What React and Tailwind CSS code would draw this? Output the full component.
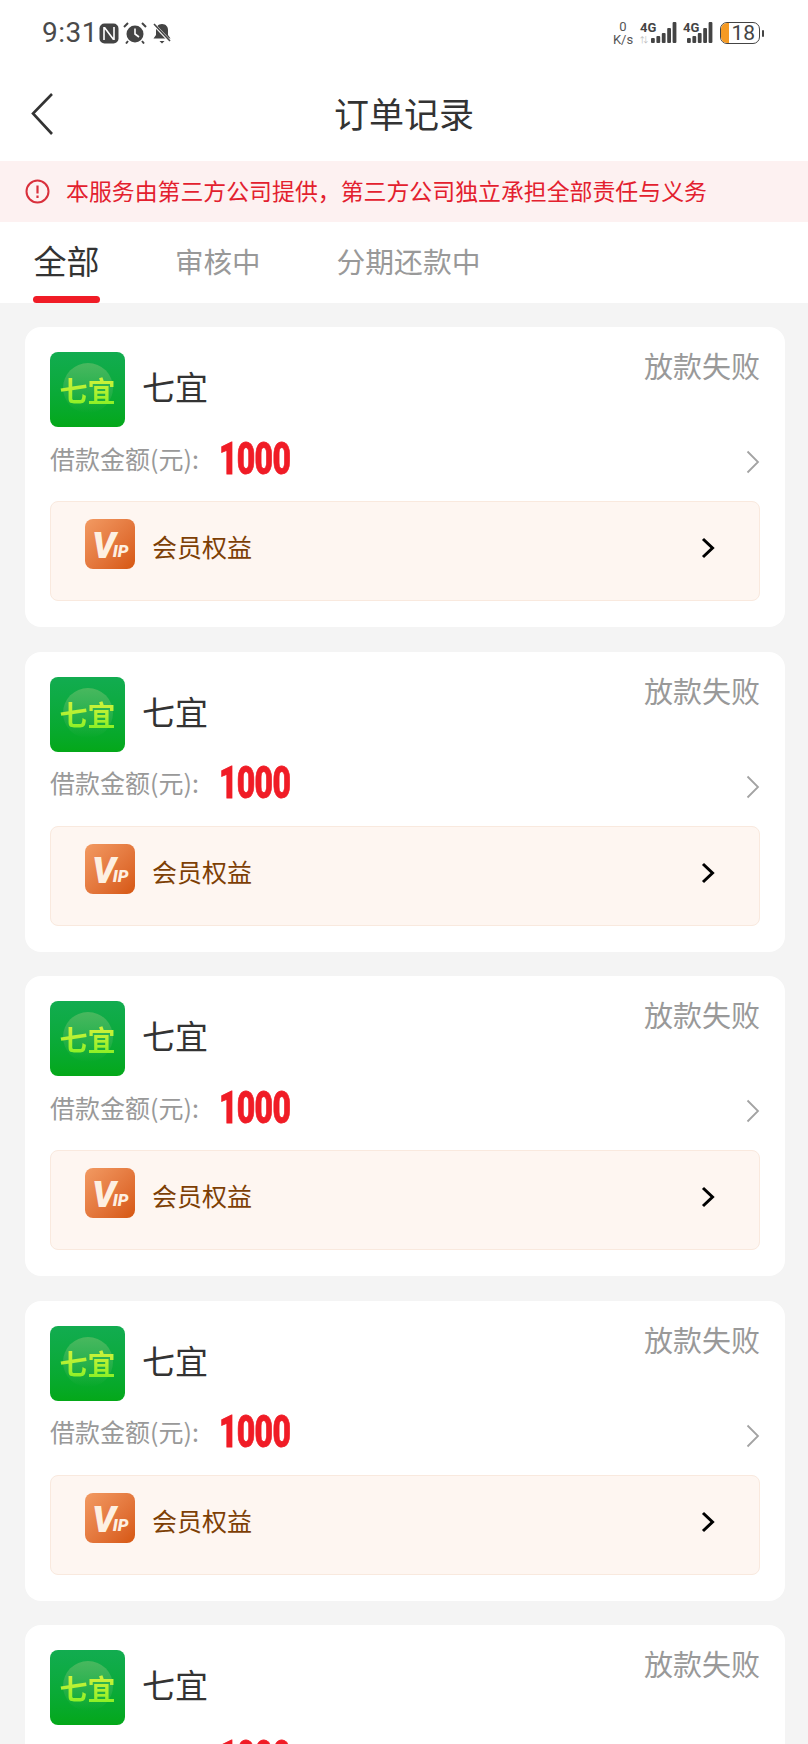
const cjk = "font-['Noto_Sans_CJK_SC','Noto_Sans',sans-serif]";
const orders = [1, 2, 3, 4, 5];
const bars = [
  [0, 17, 5],
  [5.4, 15, 7],
  [10.8, 12, 10],
  [16.2, 7, 15],
  [21.6, 1, 21],
];

function StatusBar() {
  return (
    <div className="flex h-[66px] items-center justify-between pl-[42px] pr-[44px] text-[#444]">
      <div className="flex items-center">
        <span className="w-[57px] font-['Roboto',sans-serif] text-[28px] leading-none tracking-[0.5px] text-[#4a4a4a]">9:31</span>
        <svg width="20" height="21" viewBox="0 0 20 21">
          <rect x="0.5" y="0.5" width="19" height="20" rx="5" fill="#444" />
          <path d="M5 17V4M15 17V4M5.5 4.5l9 12" fill="none" stroke="#fff" strokeWidth="1.6" />
        </svg>
        <svg width="24" height="22" viewBox="0 0 24 22" className="ml-[4px]">
          <circle cx="12" cy="12" r="8.5" fill="#444" />
          <path d="M12 6.5V12l4 3" fill="none" stroke="#fff" strokeWidth="1.6" />
          <path d="M1 5l4-4M23 5l-4-4M5 19l-2 2.5M19 19l2 2.5" stroke="#444" strokeWidth="2" />
        </svg>
        <svg width="20" height="21" viewBox="0 0 20 21" className="ml-[5px]">
          <path d="M10 1c4 0 6 3 6 6v5l2.5 3.5h-17L4 12V7c0-3 2-6 6-6z" fill="#444" />
          <path d="M7.5 18h5l-2.5 2.5z" fill="#444" />
          <path d="M2 1.5l16 17" stroke="#fff" strokeWidth="3" />
          <path d="M2 1l16 17" stroke="#444" strokeWidth="1.6" />
        </svg>
      </div>
      <div className="flex items-center">
        <div className="flex w-[24px] flex-col items-center font-['Roboto',sans-serif] text-[13px] leading-[13px] text-[#555]">
          <span>0</span>
          <span>K/s</span>
        </div>
        <Signal className="ml-[5px] w-[38px]" barX={11} arrows />
        <Signal className="ml-[5px] w-[32px]" barX={4} />
        <div className="ml-[5px] flex items-center">
          <div className="relative flex h-[22px] w-[40px] items-center justify-end overflow-hidden rounded-[7px] border-[1.5px] border-[#444] pr-[4px]">
            <div className="absolute left-0 top-0 h-full w-[8px] bg-[#f59a23]" />
            <span className="font-['Roboto',sans-serif] text-[21px] leading-none text-[#444]">18</span>
          </div>
          <div className="ml-[2px] h-[7px] w-[2px] rounded-sm bg-[#444]" />
        </div>
      </div>
    </div>
  );
}

function Signal({ className, barX, arrows }) {
  return (
    <div className={`relative h-[24px] ${className}`}>
      <svg width="38" height="24" viewBox="0 0 38 24" className="absolute left-0 top-0">
        {bars.map(([x, y, h]) => (
          <rect key={x} x={barX + x} y={y} width="3.8" height={h} rx="1" fill="#444" />
        ))}
      </svg>
      <span className="absolute left-0 top-[1px] font-['Roboto',sans-serif] text-[13px] font-bold leading-[12px] text-[#444]">4G</span>
      {arrows && <span className="absolute left-0 top-[15px] text-[8px] leading-[8px] text-[#bbb]">⇅</span>}
    </div>
  );
}

function AppLogo() {
  return (
    <div className="relative flex h-[75px] w-[75px] shrink-0 items-center justify-center overflow-hidden rounded-[8px] bg-gradient-to-b from-[#12ac50] to-[#04a818]">
      <div className="absolute left-[13px] top-[11px] h-[50px] w-[50px] rounded-full bg-gradient-to-b from-[#48b85e] to-transparent" />
      <span className="relative bg-gradient-to-b from-[#d4f23c] to-[#8cf026] bg-clip-text font-['Noto_Sans_CJK_SC',sans-serif] text-[28px] font-bold leading-none text-transparent">七宜</span>
    </div>
  );
}

function VipLogo() {
  return (
    <div className="relative flex h-[50px] w-[50px] shrink-0 items-start overflow-hidden rounded-[8px] bg-gradient-to-br from-[#f29a62] to-[#d6570e] pl-[7px] pt-[8px]">
      <span className="font-['Roboto',sans-serif] text-[37px] font-black italic leading-none tracking-[-3px] text-[#fdf0e2]">V</span>
      <span className="mt-[16px] font-['Roboto',sans-serif] text-[17px] font-black italic leading-none text-[#fdf0e2]">IP</span>
    </div>
  );
}

function OrderCard() {
  return (
    <div className={`flex h-[300px] shrink-0 flex-col rounded-[16px] bg-white px-[25px] pt-[25px] ${cjk}`}>
      <div className="flex items-start">
        <AppLogo />
        <span className="ml-[17px] mt-[12px] text-[33px] leading-[44px] text-[#333]">七宜</span>
        <span className="ml-auto mt-[-7px] text-[29px] leading-[40px] text-[#999]">放款失败</span>
      </div>
      <div className="mt-[13px] flex h-[40px] items-center">
        <span className="mt-[-4px] text-[25px] leading-none text-[#999]">借款金额(元):</span>
        <span className="ml-[20px] mt-[-4px] w-[72px] origin-left scale-x-[0.71] font-['Roboto',sans-serif] text-[45px] font-black leading-none tracking-[-1px] text-[#f01c26] [-webkit-text-stroke:0.8px_#f01c26]">1000</span>
        <svg width="14" height="24" viewBox="0 0 14 24" className="ml-auto mt-[4px]">
          <path d="M1.5 1.5L12 12L1.5 22.5" fill="none" stroke="#a3a3a3" strokeWidth="1.8" />
        </svg>
      </div>
      <div className="mt-[21px] flex h-[100px] shrink-0 items-start rounded-[8px] border border-[#f9e9de] bg-[#fef6f1] pl-[34px] pr-[44px] pt-[17px]">
        <VipLogo />
        <span className="ml-[17px] mt-[9px] text-[25px] leading-[36px] text-[#7d3f05]">会员权益</span>
        <svg width="14" height="22" viewBox="0 0 14 22" className="ml-auto mt-[18px]">
          <path d="M2 2L11.5 11L2 20" fill="none" stroke="#000" strokeWidth="3" />
        </svg>
      </div>
    </div>
  );
}

export default function App() {
  return (
    <div className={`flex h-[1744px] w-[808px] flex-col overflow-hidden bg-[#f4f4f4] ${cjk}`}>
      <div className="shrink-0 bg-white">
        <StatusBar />
        <div className="relative flex h-[95px] items-center justify-center">
          <svg width="24" height="44" viewBox="0 0 24 44" className="absolute left-[30px] top-[26px]">
            <path d="M22 2L3 21.5L22 42" fill="none" stroke="#333" strokeWidth="2.6" />
          </svg>
          <span className="mt-[-2px] text-[35px] leading-none text-[#333]">订单记录</span>
        </div>
      </div>
      <div className="flex h-[61px] shrink-0 items-center bg-[#fdf1f1] pl-[25px]">
        <svg width="25" height="25" viewBox="0 0 25 25" className="mt-[-1px]">
          <circle cx="12.5" cy="12.5" r="11" fill="none" stroke="#d9303c" strokeWidth="2" />
          <path d="M12.5 6.5v8M12.5 16.5v2.5" stroke="#d9303c" strokeWidth="2.2" />
        </svg>
        <span className="ml-[16px] mt-[-2px] text-[22.9px] leading-none text-[#e3202e]">{"本服务由第三方公司提供\uFF0C第三方公司独立承担全部责任与义务"}</span>
      </div>
      <div className="flex h-[81px] shrink-0 items-start bg-white">
        <div className="relative ml-[33px] flex h-[81px] w-[67px] justify-center">
          <span className="mt-[16px] text-[33px] leading-[44px] text-[#333]">全部</span>
          <div className="absolute bottom-0 left-0 h-[7px] w-full rounded-full bg-[#f01c26]" />
        </div>
        <span className="ml-[75px] mt-[19px] text-[28.5px] leading-[40px] text-[#999]">审核中</span>
        <span className="ml-[76px] mt-[19px] text-[28.8px] leading-[40px] text-[#999]">分期还款中</span>
      </div>
      <div className="flex flex-col gap-[24.6px] pl-[25px] pr-[23px] pt-[24px]">
        {orders.map((o) => (
          <OrderCard key={o} />
        ))}
      </div>
    </div>
  );
}
